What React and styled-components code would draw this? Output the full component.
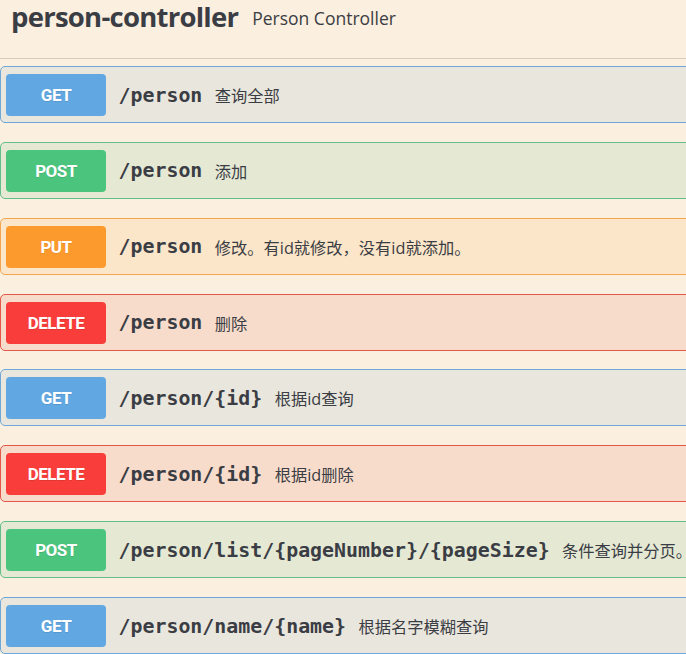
import React from "react";
import styled, { createGlobalStyle } from "styled-components";

const Global = createGlobalStyle`
  html, body { margin: 0; padding: 0; background: #fbefdf; overflow: hidden; }
  body { font-family: "Open Sans", "Noto Sans CJK SC", sans-serif; color: #3b3d44; }
`;

const Page = styled.div`
  width: 760px;
`;

const TagHeader = styled.div`
  display: flex;
  align-items: center;
  height: 59px;
  box-sizing: border-box;
  padding: 0 20px 24px 11px;
  border-bottom: 1px solid #d8cdbd;
  margin-bottom: 7px;
`;

const TagName = styled.h4`
  margin: 0;
  font-family: "Open Sans", sans-serif;
  font-weight: 700;
  font-size: 27.5px;
  line-height: 34px;
  letter-spacing: -0.75px;
  color: #3b3d44;
`;

const TagSmall = styled.small`
  margin-top: 2px;
  font-family: "Open Sans", sans-serif;
  font-size: 17.5px;
  line-height: 24px;
  color: #3b3d44;
  padding-left: 14px;
`;

const themes = {
  GET: { bg: "#e9e6dd", border: "#6ea7d8", badge: "#61a7e1" },
  POST: { bg: "#e5e9d4", border: "#62be8a", badge: "#4bc47e" },
  PUT: { bg: "#fbe6c9", border: "#f3a650", badge: "#fc9a2e" },
  DELETE: { bg: "#f8dccb", border: "#e4574b", badge: "#f93d3a" },
};

const Row = styled.div`
  border: 1px solid ${(p) => themes[p.$m].border};
  background: ${(p) => themes[p.$m].bg};
  border-radius: 5px;
  margin-bottom: 18.86px;
`;

const Summary = styled.div`
  display: flex;
  align-items: center;
  padding: 7px 5px 6px 5px;
`;

const Badge = styled.span`
  flex: none;
  width: 100px;
  height: 42px;
  border-radius: 4px;
  background: ${(p) => themes[p.$m].badge};
  color: #fff;
  font-family: "Roboto", "Open Sans", sans-serif;
  font-weight: 700;
  font-size: 17px;
  letter-spacing: -0.5px;
  display: flex;
  align-items: center;
  justify-content: center;
  text-shadow: 0 1px 0 rgba(0, 0, 0, 0.1);
`;

const Path = styled.span`
  font-family: "DejaVu Sans Mono", "Liberation Mono", monospace;
  font-weight: 700;
  font-size: 19.9px;
  color: #3b3d44;
  padding: 0 12.5px;
  white-space: nowrap;
`;

const Desc = styled.span`
  font-family: "Open Sans", "Noto Sans CJK SC", sans-serif;
  font-size: 16.25px;
  color: #3b3d44;
  white-space: nowrap;
`;

const ops = [
  ["GET", "/person", "查询全部"],
  ["POST", "/person", "添加"],
  ["PUT", "/person", "修改。有id就修改，没有id就添加。"],
  ["DELETE", "/person", "删除"],
  ["GET", "/person/{id}", "根据id查询"],
  ["DELETE", "/person/{id}", "根据id删除"],
  ["POST", "/person/list/{pageNumber}/{pageSize}", "条件查询并分页。"],
  ["GET", "/person/name/{name}", "根据名字模糊查询"],
];

export default function App() {
  return (
    <Page>
      <Global />
      <TagHeader>
        <TagName>person-controller</TagName>
        <TagSmall>Person Controller</TagSmall>
      </TagHeader>
      {ops.map(([m, path, desc], i) => (
        <Row key={i} $m={m}>
          <Summary>
            <Badge $m={m}>{m}</Badge>
            <Path>{path}</Path>
            <Desc>{desc}</Desc>
          </Summary>
        </Row>
      ))}
    </Page>
  );
}
